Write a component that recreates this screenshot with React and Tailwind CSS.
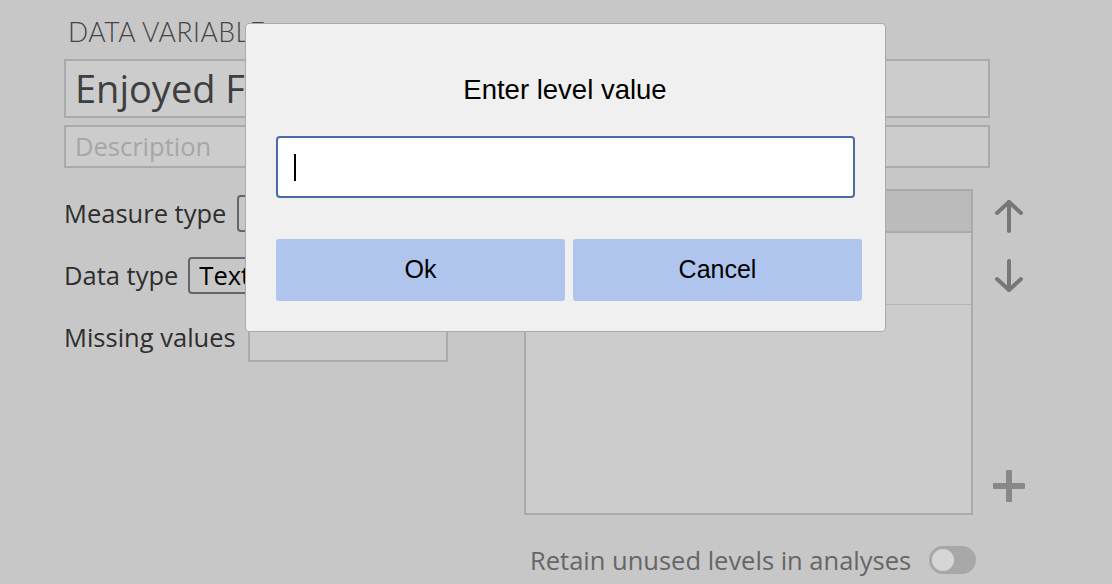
import React from 'react';

const ArrowUp = () => (
  <svg width="34" height="36" viewBox="0 0 34 36" fill="none" stroke="#777" strokeWidth="4" strokeLinecap="round" strokeLinejoin="round">
    <path d="M17 33V4" />
    <path d="M5 15L17 4l12 11" />
  </svg>
);

const ArrowDown = () => (
  <svg width="34" height="36" viewBox="0 0 34 36" fill="none" stroke="#777" strokeWidth="4" strokeLinecap="round" strokeLinejoin="round">
    <path d="M17 3v29" />
    <path d="M5 21l12 11 12-11" />
  </svg>
);

const Plus = () => (
  <svg width="34" height="34" viewBox="0 0 34 34" fill="#888">
    <rect x="14" y="1" width="6" height="32" rx="1" />
    <rect x="1" y="14" width="32" height="6" rx="1" />
  </svg>
);

const App = () => {
  return (
    <div
      className="relative w-[1112px] h-[584px] overflow-hidden bg-[#c7c7c7]"
      style={{ fontFamily: '"Open Sans", "Liberation Sans", sans-serif' }}
    >
      {/* Variable editor behind the modal */}
      <div className="pl-[64px] pt-[14px]">
        <div
          className="pl-[4px] text-[26.5px] leading-[36px] font-light text-[#444] tracking-[0.5px]"
          style={{ fontFamily: 'Lato, "Open Sans", sans-serif' }}
        >
          DATA VARIABLE
        </div>
        <div className="mt-[9px] w-[926px] h-[59px] border-2 border-[#aaaaaa] bg-[#cccccc] px-[9px] flex items-center text-[38px] text-[#3e3e3e]">
          Enjoyed Film
        </div>
        <div className="mt-[7px] w-[926px] h-[43px] border-2 border-[#aaaaaa] bg-[#cccccc] px-[9px] flex items-center text-[25.5px] text-[#a6a6a6]">
          Description
        </div>

        <div className="mt-[21px] flex">
          <div className="w-[460px] shrink-0 flex flex-col text-[25.5px] text-[#2e2e2e]">
            <div className="h-[37px] flex items-center mt-[6px]">
              <span>Measure type</span>
              <div className="ml-[11px] w-[200px] h-[37px] border-2 border-[#666] rounded-[4px]" />
            </div>
            <div className="h-[37px] flex items-center mt-[25px]">
              <span>Data type</span>
              <div className="ml-[10px] w-[200px] h-[37px] border-2 border-[#666] rounded-[4px] px-[9px] flex items-center text-black">
                Text
              </div>
            </div>
            <div className="h-[37px] flex items-center mt-[25px]">
              <span>Missing values</span>
              <div className="ml-[12px] w-[200px] h-[32px] mt-[16px] border-2 border-[#aaaaaa] bg-[#cccccc]" />
            </div>
          </div>

          <div className="flex shrink-0">
            <div className="w-[449px] h-[326px] border-2 border-[#aaaaaa] bg-[#cccccc] flex flex-col">
              <div className="h-[42px] bg-[#bbbbbb] border-b-2 border-[#aaaaaa]" />
              <div className="h-[72px] border-b border-[#b5b5b5]" />
            </div>
            <div className="ml-[19px] flex flex-col items-center w-[34px]">
              <div className="mt-[9px]"><ArrowUp /></div>
              <div className="mt-[24px]"><ArrowDown /></div>
              <div className="mt-[175px]"><Plus /></div>
            </div>
          </div>
        </div>

        <div className="mt-[26px] pl-[466px] flex items-center text-[25.5px] text-[#666]">
          <span>Retain unused levels in analyses</span>
          <div className="ml-[18px] w-[47px] h-[28px] rounded-full bg-[#a8a8a8] flex items-center px-[3px]">
            <div className="w-[22px] h-[22px] rounded-full bg-[#d6d6d6]" />
          </div>
        </div>
      </div>

      {/* Modal dialog */}
      <div
        className="absolute left-[245px] top-[23px] w-[641px] h-[309px] bg-[#f0f0f0] border border-[#aaaaaa] rounded-[4px] pl-[30px] pr-[23px] pt-[51px]"
        style={{ fontFamily: '"Liberation Sans", Arial, sans-serif' }}
      >
        <div className="text-center text-[27.5px] leading-[30px] text-black pr-[8px]">Enter level value</div>
        <div className="mt-[31px] w-[579px] h-[62px] bg-white border-2 border-[#4a6ca6] rounded-[4px] flex items-center pl-[16px]">
          <div className="w-[2px] h-[27px] bg-black" />
        </div>
        <div className="mt-[41px] flex gap-[8px]">
          <button className="flex-1 h-[62px] rounded-[3px] bg-[#b0c5ed] text-[25px] text-black">Ok</button>
          <button className="flex-1 h-[62px] rounded-[3px] bg-[#b0c5ed] text-[25px] text-black">Cancel</button>
        </div>
      </div>
    </div>
  );
};

export default App;
